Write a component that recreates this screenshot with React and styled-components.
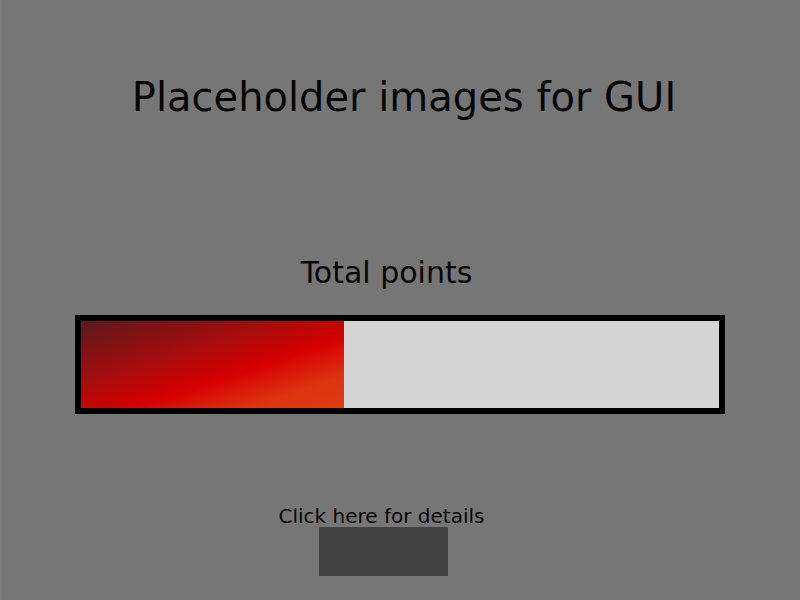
import React from 'react';
import styled, { createGlobalStyle } from 'styled-components';

const GlobalStyle = createGlobalStyle`
  html, body {
    margin:0;
    padding:0;
    background:#767676;
  }
  body {
    font-family:"DejaVu Sans", Verdana, sans-serif;
  }
`

const Page = styled.div`
  width:800px;
  height:600px;
  display:flex;
  flex-direction:column;
  align-items:center;
  box-sizing:border-box;
  border-left:2px solid #7c7c7c;
`
const Title = styled.h1`
  margin:74px 0 0 6px;
  font-size:40px;
  font-weight:400;
  color:#050505;
  line-height:46px;
`
const Label = styled.h2`
  margin:${p => p.top}px ${p => p.right || 0}px 0 0;
  font-size:${p => p.size}px;
  font-weight:400;
  color:#050505;
  line-height:${p => p.lh}px;
`
const Bar = styled.div`
  margin:24px 2px 0 0;
  width:650px;
  height:99px;
  box-sizing:border-box;
  border:6px solid #000;
  background:#d4d4d4;
  display:flex;
`
const Fill = styled.div`
  height:100%;
  background:linear-gradient(to bottom right, #5a1a1c 0%, #a80c0c 38%, #d60000 60%, #dc3512 82%, #e03c12 100%);
`
const DetailsButton = styled.div`
  margin:0 35px 0 0;
  width:129px;
  height:49px;
  background:#424242;
`

const App = () => {
  const points = 0.412
  return (
    <>
      <GlobalStyle />
      <Page>
        <Title>Placeholder images for GUI</Title>
        <Label top={135} right={29} size={30} lh={36}>Total points</Label>
        <Bar>
          <Fill style={{ width: `${points * 100}%` }} />
        </Bar>
        <Label top={91} right={39} size={20} lh={22}>Click here for details</Label>
        <DetailsButton />
      </Page>
    </>
  )
}

export default App
